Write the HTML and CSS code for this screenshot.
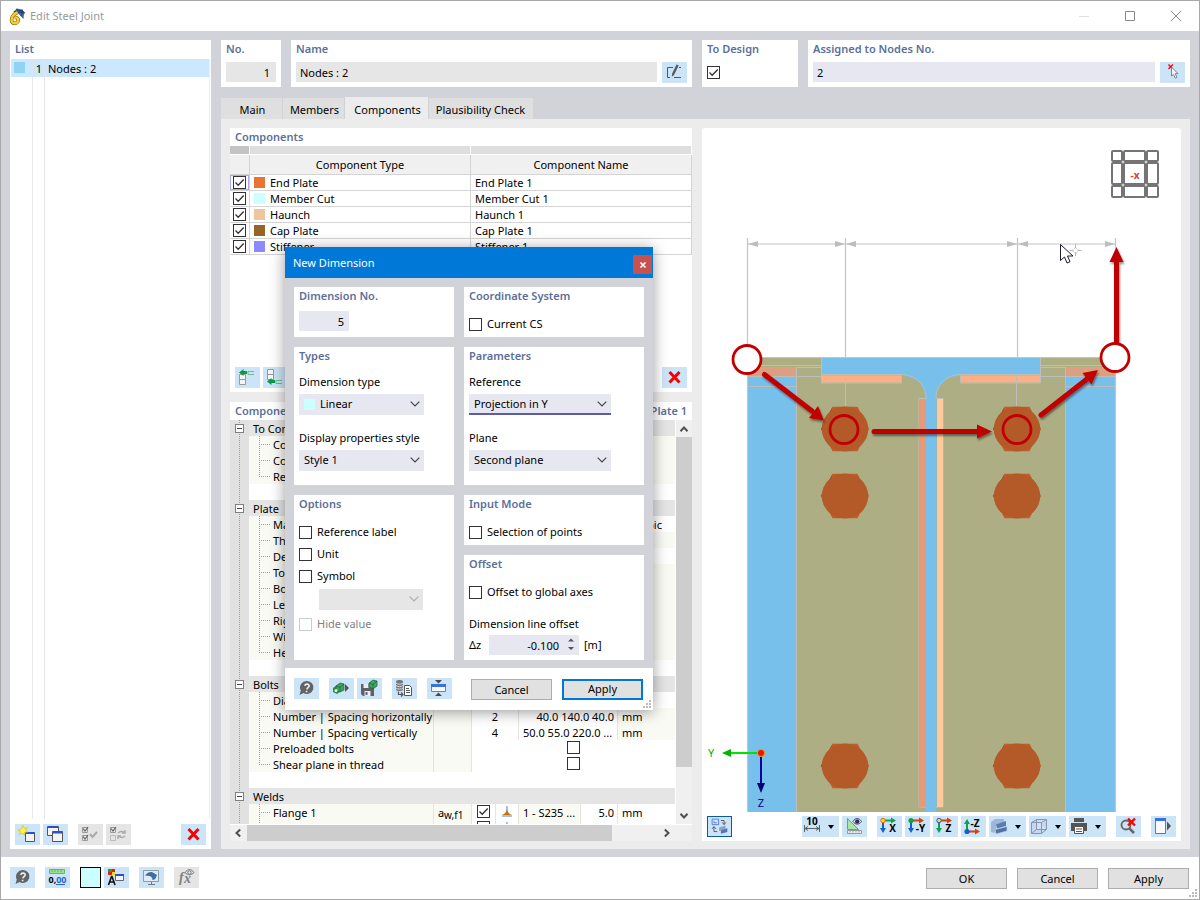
FILE: index.html
```html
<!DOCTYPE html>
<html lang="en">
<head>
<meta charset="utf-8">
<title>Edit Steel Joint</title>
<link rel="stylesheet" href="styles.css">
</head>
<body>
<svg class="defs" aria-hidden="true">
  <defs>
    <symbol id="i-help" viewBox="0 0 25 21"><path d="M13 3a6.500 6.500 0 1 1-3.500 12L5.500 17l1.300-4.500A6.500 6.500 0 0 1 13 3z" fill="#636363"/><path d="M10.800 7.800c.5-2.400 4.500-2.200 4.300.2-.1 1.600-2 1.500-2.200 3.300M12.600 12.700v1.600" fill="none" stroke="#e4f0fa" stroke-width="1.700"/></symbol>
    <symbol id="i-x" viewBox="0 0 25 21"><path d="M7.500 5l10 10.500M17.500 5l-10 10.500" stroke="#f90000" stroke-width="3"/></symbol>
    <symbol id="i-chev" viewBox="0 0 10 6"><path d="M.7.700L5 5 9.300.700" fill="none" stroke="currentColor" stroke-width="1.200"/></symbol>
    <symbol id="i-arrow" viewBox="0 0 10 8"><path d="M1.500 6.200L5 2.500l3.500 3.700" fill="none" stroke="#505050" stroke-width="2"/></symbol>
    <symbol id="i-grip" viewBox="0 0 9 9"><path d="M6 0h2v2H6zM3 3h2v2H3zM6 3h2v2H6zM0 6h2v2H0zM3 6h2v2H3zM6 6h2v2H6z" fill="#bbb"/></symbol>
    <symbol id="i-weld" viewBox="0 0 14 14"><path d="M6 1h2v6H6z" fill="#a9bfe3"/><path d="M2 10h10v2H2z" fill="#a9bfe3"/><path d="M7 4c.5 3 2 5 5 6H2c3-1 4.500-3 5-6z" fill="#c07318"/></symbol>
    <symbol id="bolt" viewBox="-25 -25 50 50"><path d="M-24 0L-12.500-22.300H12.500L24 0 12.500 22.300H-12.500z" fill="#c05d28"/><path d="M-24 0L-12.500-22.300-15-14-21 4z" fill="#91481f"/><ellipse rx="23.300" ry="22.500" fill="#b45a28"/></symbol>
  </defs>
</svg>
<div class="window">
  <header class="titlebar">
    <svg class="logo" viewBox="0 0 17 17"><path d="M4 4l4-3.500 5 1L16.500 5l-1.500 1-.5 5-3-3-3-3.500z" fill="#44689b"/><path d="M5 4l9-2M7 1l8 4M9 5l6-1M12 8l2-5" stroke="#1f3963" stroke-width=".8"/><path d="M8.500 4.500C5 5.500 2.500 9 2.500 12c0 2 1.300 3.200 3.200 3.200s3.500-1.200 3.500-3S8 9.300 5.600 9.600" fill="none" stroke="#7a6016" stroke-width="3.600"/><path d="M8.500 4.500C5 5.500 2.500 9 2.500 12c0 2 1.300 3.200 3.200 3.200s3.500-1.200 3.500-3S8 9.300 5.600 9.600" fill="none" stroke="#f5cd2c" stroke-width="2.400"/></svg>
    <h1>Edit Steel Joint</h1>
    <button class="wbtn" aria-label="Minimize"><svg viewBox="0 0 10 10"><path d="M0 5.500h10" stroke="#e2e2e2"/></svg></button>
    <button class="wbtn" aria-label="Maximize"><svg viewBox="0 0 10 10"><path d="M.5.500h9v9h-9z" fill="none" stroke="#8a8a8a"/></svg></button>
    <button class="wbtn" aria-label="Close"><svg viewBox="0 0 10 10"><path d="M0 0l10 10M10 0L0 10" stroke="#8a8a8a"/></svg></button>
  </header>

  <main class="main">
    <section class="panel list">
      <h2>List</h2>
      <div class="listbody">
        <div class="listrow"><span class="c1"><i class="sw sky"></i></span><span class="c2">1</span><span class="c3">Nodes : 2</span></div>
        <div class="listrest"><span class="c1"></span><span class="c2"></span><span class="c3"></span></div>
      </div>
      <div class="tools">
        <button class="ib" aria-label="New"><svg viewBox="0 0 25 21"><path d="M10.500 8.500h9v9h-9z" fill="#f1f3f7" stroke="#555"/><path d="M11 8h8.500v2H11z" fill="#2c50c8"/><path d="M8 1.500l1.200 3L12.500 3.500l-1.800 2.800 2.300 1.700-3.300.3-.2 3.200-2-2.500-3 1.500 1-3-2.500-1.500 3-.5z" fill="#fff04a" stroke="#d9b800" stroke-width=".6"/></svg></button>
        <button class="ib" aria-label="Copy"><svg viewBox="0 0 25 21"><path d="M4.500 2.500h11v9h-11z" fill="#f1f3f7" stroke="#555"/><path d="M5 2h10v2H5z" fill="#2c50c8"/><path d="M9.500 7.500h10v10h-10z" fill="#f1f3f7" stroke="#555"/><path d="M10 7h9v2.500h-9z" fill="#2c50c8"/></svg></button>
        <button class="ib off gap" aria-label="Select all" disabled><svg viewBox="0 0 25 21"><g fill="none" stroke="#9a9a9a"><path d="M4.500 3.500h5v5h-5zM4.500 11.500h5v5h-5z"/><path d="M5 4.500l2 2.500L10 3M5 12.500l2 2.500 3-4" stroke="#666" stroke-width="1.200"/><path d="M12 10l2.500 3L19 8" stroke="#aaa" stroke-width="2"/></g></svg></button>
        <button class="ib off" aria-label="Invert selection" disabled><svg viewBox="0 0 25 21"><g fill="none" stroke="#9a9a9a"><path d="M4.500 3.500h5v5h-5z"/><path d="M4.500 11.500h5v5h-5z" stroke="#bbb"/><path d="M5 4.500l2 2.500L10 3" stroke="#666" stroke-width="1.200"/><path d="M12 9c2-2 4-2 6.500-.5M19 6v3h-3M19 12c-2 2-4 2-6.500.5M12 15v-3h3" stroke="#aaa" stroke-width="1.400"/></g></svg></button>
        <span class="fill"></span>
        <button class="ib" aria-label="Delete"><svg><use href="#i-x"/></svg></button>
      </div>
    </section>

    <div class="right">
      <div class="heads">
        <section class="panel no"><h2><label for="no">No.</label></h2><input id="no" class="tf grey num" value="1" readonly></section>
        <section class="panel name"><h2><label for="name">Name</label></h2>
          <div class="line"><input id="name" class="tf grey" value="Nodes : 2" readonly><button class="ib" aria-label="Edit name"><svg viewBox="0 0 25 21"><path d="M11 5.500H5.500v10H8M12 15.500h7M17 5.500h2" fill="none" stroke="#555"/><path d="M14.500 2.500l2.200 1L12 13l-2.200 1.800.2-3z" fill="#5b5b5b"/></svg></button></div></section>
        <section class="panel design"><h2>To Design</h2><input type="checkbox" class="cb" checked aria-label="To Design"></section>
        <section class="panel assigned"><h2><label for="nodes">Assigned to Nodes No.</label></h2>
          <div class="line"><input id="nodes" class="tf" value="2"><button class="ib" aria-label="Select nodes"><svg viewBox="0 0 25 21"><path d="M8.500 2.500l4 4.500M13 2.500L8.500 7" stroke="#f00" stroke-width="1.400"/><path d="M11.500 5v9l2-1.600 1.800 3.800 1.700-.8-1.800-3.700h2.800z" fill="#f4f8fc" stroke="#777" stroke-width=".9"/></svg></button></div></section>
      </div>

      <nav class="tabs" role="tablist">
        <button class="tab t1" role="tab">Main</button><button class="tab t2" role="tab">Members</button><button class="tab t3 on" role="tab" aria-selected="true">Components</button><button class="tab t4" role="tab">Plausibility Check</button>
      </nav>

      <div class="body">
        <div class="leftcol">
          <section class="panel comps">
            <h2>Components</h2>
            <table class="ctable">
              <colgroup><col class="k1"><col class="k2"><col class="k3"></colgroup>
              <thead><tr class="strip"><td></td><td></td><td></td></tr><tr><th></th><th>Component Type</th><th>Component Name</th></tr></thead>
              <tbody>
                <tr><td class="cur"><input type="checkbox" class="cb" checked aria-label="End Plate"></td><td><i class="sw orange"></i>End Plate</td><td>End Plate 1</td></tr>
                <tr><td><input type="checkbox" class="cb" checked aria-label="Member Cut"></td><td><i class="sw cyan"></i>Member Cut</td><td>Member Cut 1</td></tr>
                <tr><td><input type="checkbox" class="cb" checked aria-label="Haunch"></td><td><i class="sw tan"></i>Haunch</td><td>Haunch 1</td></tr>
                <tr><td><input type="checkbox" class="cb" checked aria-label="Cap Plate"></td><td><i class="sw brown"></i>Cap Plate</td><td>Cap Plate 1</td></tr>
                <tr><td><input type="checkbox" class="cb" checked aria-label="Stiffener"></td><td><i class="sw violet"></i>Stiffener</td><td>Stiffener 1</td></tr>
              </tbody>
            </table>
            <div class="tools push">
              <button class="ib" aria-label="Insert above"><svg viewBox="0 0 25 21"><path d="M4.500 7.500h6v5h-6zM4.500 12.500h6v5h-6z" fill="#f6f6f6" stroke="#999"/><path d="M4 5.500L8.500 2v2H12v3H8.500v2z" fill="#0a9a48"/><path d="M19 4.500h-6v3h6" fill="none" stroke="#6cc08e"/></svg></button>
              <button class="ib" aria-label="Insert below"><svg viewBox="0 0 25 21"><path d="M4.500 2.500h6v5h-6zM4.500 7.500h6v5h-6z" fill="#f6f6f6" stroke="#999"/><path d="M4 14.500L8.500 11v2H12v3H8.500v2z" fill="#0a9a48"/><path d="M19 13.500h-6v3h6" fill="none" stroke="#6cc08e"/></svg></button>
              <span class="fill"></span>
              <button class="ib" aria-label="Delete component"><svg><use href="#i-x"/></svg></button>
            </div>
          </section>

          <section class="panel settings">
            <div class="stitle"><h2>Component Settings</h2><h2>End Plate 1</h2></div>
            <div class="scroller">
              <div class="viewport">
                <table class="tree">
                  <colgroup><col class="w19"><col><col class="w38"><col class="w24"><col class="w23"><col class="w62"><col class="w37"><col class="w57"></colgroup>
                  <tbody>
                    <tr class="g first"><td><button class="exp" aria-label="Collapse"></button></td><td colspan="7">To Connect</td></tr>
                    <tr><td></td><td>Connected</td><td></td><td colspan="4"></td><td></td></tr>
                    <tr><td></td><td>Connector</td><td></td><td colspan="4"></td><td></td></tr>
                    <tr class="last"><td></td><td>Reference</td><td></td><td colspan="4"></td><td></td></tr>
                    <tr class="gap"><td></td><td colspan="7"></td></tr>
                    <tr class="g"><td><button class="exp" aria-label="Collapse"></button></td><td colspan="7">Plate</td></tr>
                    <tr><td></td><td>Material</td><td></td><td colspan="5" class="mat">Isotropic</td></tr>
                    <tr><td></td><td>Thickness</td><td></td><td colspan="4"></td><td></td></tr>
                    <tr><td></td><td>Definition</td><td></td><td colspan="5" class="plain"></td></tr>
                    <tr><td></td><td>Top offset</td><td></td><td colspan="4"></td><td></td></tr>
                    <tr><td></td><td>Bottom offset</td><td></td><td colspan="4"></td><td></td></tr>
                    <tr><td></td><td>Left offset</td><td></td><td colspan="4"></td><td></td></tr>
                    <tr><td></td><td>Right offset</td><td></td><td colspan="4"></td><td></td></tr>
                    <tr><td></td><td>Width</td><td></td><td colspan="4"></td><td></td></tr>
                    <tr class="last"><td></td><td>Height</td><td></td><td colspan="4"></td><td></td></tr>
                    <tr class="gap"><td></td><td colspan="7"></td></tr>
                    <tr class="g"><td><button class="exp" aria-label="Collapse"></button></td><td colspan="7">Bolts</td></tr>
                    <tr><td></td><td>Diameter</td><td></td><td colspan="5" class="plain"></td></tr>
                    <tr><td></td><td>Number | Spacing horizontally</td><td></td><td colspan="2" class="mid">2</td><td colspan="2" class="num">40.0 140.0 40.0</td><td class="unit">mm</td></tr>
                    <tr><td></td><td>Number | Spacing vertically</td><td></td><td colspan="2" class="mid">4</td><td colspan="2" class="val">50.0 55.0 220.0 ...</td><td class="unit">mm</td></tr>
                    <tr><td></td><td>Preloaded bolts</td><td></td><td colspan="5" class="mid box"><input type="checkbox" class="cb" aria-label="Preloaded bolts"></td></tr>
                    <tr class="last"><td></td><td>Shear plane in thread</td><td></td><td colspan="5" class="mid box"><input type="checkbox" class="cb" aria-label="Shear plane in thread"></td></tr>
                    <tr class="gap"><td></td><td colspan="7"></td></tr>
                    <tr class="g"><td><button class="exp" aria-label="Collapse"></button></td><td colspan="7">Welds</td></tr>
                    <tr class="w"><td></td><td>Flange 1</td><td class="sym">a<small>w,f1</small></td><td class="mid box"><input type="checkbox" class="cb" checked aria-label="Flange 1"></td><td class="mid box"><svg class="weld"><use href="#i-weld"/></svg></td><td class="val dim">1 - S235 ...</td><td class="num">5.0</td><td class="unit plain">mm</td></tr>
                    <tr class="w"><td></td><td></td><td></td><td class="mid box"><input type="checkbox" class="cb" aria-label="Flange 2"></td><td class="mid box"><svg class="weld"><use href="#i-weld"/></svg></td><td class="val dim"></td><td></td><td class="unit plain"></td></tr>
                  </tbody>
                </table>
              </div>
              <div class="vbar"><svg><use href="#i-arrow"/></svg><i></i><svg class="down"><use href="#i-arrow"/></svg></div>
            </div>
            <div class="hbar"><svg class="lt"><use href="#i-arrow"/></svg><i></i><svg class="rt"><use href="#i-arrow"/></svg></div>
          </section>
        </div>

        <section class="view">
          <svg class="scene" viewBox="702 128 479 684" preserveAspectRatio="xMidYMax meet" role="img" aria-label="Joint view">
            <defs>
              <filter id="sh" x="-20%" y="-20%" width="140%" height="150%"><feDropShadow dx="1" dy="2" stdDeviation="1.300" flood-opacity=".45"/></filter>
              <g id="half">
                <path d="M747 358h74v18h80c14 0 24.500 8 24.500 23v413H796V376h-49z" fill="#aeae85"/>
                <path d="M747 367h49v9h-49z" fill="#dc9f80"/>
                <path d="M821 375.500h80v7h-80z" fill="#ffaf84"/>
                <path d="M747.500 365.500H821M796.500 812V367.500H821M747 376.500h74M747 386.500h49M821.500 358v25h80v-7.500M821 374.500h80c14 0 25 9 25 24h-7V807h7" fill="none" stroke="#bfbdb8"/>
                <path d="M845.500 376v31" stroke="#bfbdb8"/>
              </g>
            </defs>
            <path d="M747 358h368v454H747z" fill="#78c0ec"/>
            <use href="#half"/><use href="#half" transform="translate(1862 0) scale(-1 1)"/>
            <path d="M919 399h6.500v408H919z" fill="#e69a78"/><path d="M937 399h6v408h-6z" fill="#ffcb9c"/>
            <g fill="none" stroke="#c4c4c4"><path d="M747.500 238v574M1115.500 238v574M747 357.500h368M845.500 238v119M1017.500 238v119M748 244h367" stroke-width="1.200"/></g>
            <path d="M748 244l10-3v6zM845 244l-10-3v6zM846 244l10-3v6zM1017 244l-10-3v6zM1018 244l10-3v6zM1115 244l-10-3v6z" fill="#bdbdbd"/>
            <g>
              <use href="#bolt" x="820" y="404" width="50" height="50"/><use href="#bolt" x="820" y="471" width="50" height="50"/><use href="#bolt" x="820" y="741" width="50" height="50"/>
              <use href="#bolt" x="992" y="404" width="50" height="50"/><use href="#bolt" x="992" y="471" width="50" height="50"/><use href="#bolt" x="992" y="741" width="50" height="50"/>
            </g>
            <g filter="url(#sh)" fill="#c00000" stroke="#c00000">
              <path d="M764.500 374.500L812 411M874 431.500h106M1041 415l46-36M1116.500 343V261" stroke-width="5" stroke-linecap="round"/>
              <path d="M824 420.500l-15-2.500 9-12zM992 431.500l-15-7v14zM1098 370l-15.500 3 9 11.500zM1116.500 247l-7 15h14z" stroke="none"/>
            </g>
            <g fill="none" stroke="#c00000" stroke-width="2.800"><circle cx="747" cy="359.500" r="14" fill="#fff"/><circle cx="844" cy="429.500" r="14"/><circle cx="1017" cy="429.500" r="14"/><circle cx="1115" cy="357.500" r="14" fill="#fff"/></g>
            <g fill="none" stroke="#757373" stroke-width="2"><rect x="1112" y="151" width="10" height="10" rx="1"/><rect x="1124" y="151" width="21" height="10" rx="1"/><rect x="1147" y="151" width="11" height="10" rx="1"/><rect x="1112" y="163" width="10" height="21" rx="1"/><rect x="1124" y="163" width="21" height="21" rx="1"/><rect x="1147" y="163" width="11" height="21" rx="1"/><rect x="1112" y="186" width="10" height="11" rx="1"/><rect x="1124" y="186" width="21" height="11" rx="1"/><rect x="1147" y="186" width="11" height="11" rx="1"/></g>
            <text x="1135" y="179" class="cube">-x</text>
            <path d="M1060.500 244.500v16l4-3.500 2.500 6 3-1.300-2.500-5.700h5.500z" fill="#fff" stroke="#1b1b33"/>
            <path d="M1075.500 244v4M1075.500 252v4M1069.500 250.500h4M1077.500 250.500h4" stroke="#bbb"/><circle cx="1075.500" cy="250.500" r="2.500" fill="none" stroke="#bbb" stroke-dasharray="1 1"/>
            <path d="M761 753h-30" stroke="#00e400" stroke-width="2"/><path d="M722 753l9-4v8z" fill="#00b400"/><path d="M761 753v30" stroke="#0000a8" stroke-width="2"/><path d="M761 793l-4-10h8z" fill="#000070"/>
            <circle cx="761" cy="753" r="3.600" fill="#f01010" stroke="#f0a000"/><text x="711" y="757" class="ax gy">Y</text><text x="761" y="807" class="ax bz">Z</text>
          </svg>
          <div class="tools vt">
            <button class="ib act" aria-label="Switch view"><svg viewBox="0 0 25 21"><path d="M4.500 2.500h7v6h-7zM6.500 4.500v2h3" fill="#d6e3fb" stroke="#4b78d8"/><path d="M14 4h3.500v4M15.500 6l2 2.500 2-2.500M10 16H6.500v-5M4.500 13l2-2.500 2 2.500" fill="none" stroke="#555"/><path d="M12 11.500l7-2v4l-7 2z" fill="#87a5d2"/><path d="M14 14.500l7-2v4l-7 2z" fill="#5877ab"/></svg></button>
            <span class="fill"></span>
            <button class="ib wide" aria-label="Dimensions"><svg viewBox="0 0 25 21"><text x="10" y="9" class="it">10</text><path d="M2.500 9v7M17.500 9v7M3 12.500h14M6 10.500l-3 2 3 2M14 10.500l3 2-3 2" fill="none" stroke="#555" stroke-width=".9"/></svg><b></b></button>
            <button class="ib" aria-label="Show dimensions"><svg viewBox="0 0 25 21"><path d="M5.500 2.500v11h11z" fill="#a7e6a7" stroke="#52b852"/><path d="M5.500 14.500h14v3h-14z" fill="#eee" stroke="#999"/><path d="M8 15v1.500M11 15v1.500M14 15v1.500M17 15v1.500" stroke="#999"/><path d="M11 5.500c2.500-4 6-4 8.500 0-2.500 3.500-6 3.500-8.500 0z" fill="#fff" stroke="#445"/><circle cx="15.300" cy="5.500" r="2.300" fill="#2c2c70"/></svg></button>
            <button class="ib gap" aria-label="View X"><svg viewBox="0 0 25 21"><path d="M6 5v9" stroke="#1760cc" stroke-width="2"/><path d="M3 12h6l-3 5z" fill="#1760cc"/><path d="M6 4.500h9" stroke="#10a050" stroke-width="2"/><path d="M14 1.500v6l5-3z" fill="#10a050"/><circle cx="6" cy="4.500" r="2.200" fill="#fd3" stroke="#e60"/><text x="15.500" y="16" class="it">X</text></svg></button>
            <button class="ib" aria-label="View -Y"><svg viewBox="0 0 25 21"><path d="M6 5v9" stroke="#1760cc" stroke-width="2"/><path d="M3 12h6l-3 5z" fill="#1760cc"/><path d="M6 4.500h9" stroke="#d8400c" stroke-width="2"/><path d="M14 1.500v6l5-3z" fill="#d8400c"/><circle cx="6" cy="4.500" r="2.600" fill="#10a050"/><text x="15.500" y="16" class="it">-Y</text></svg></button>
            <button class="ib" aria-label="View Z"><svg viewBox="0 0 25 21"><path d="M6 5v9" stroke="#10a050" stroke-width="2"/><path d="M3 12h6l-3 5z" fill="#10a050"/><path d="M6 4.500h9" stroke="#d8400c" stroke-width="2"/><path d="M14 1.500v6l5-3z" fill="#d8400c"/><circle cx="6" cy="4.500" r="2.200" fill="#fd3" stroke="#25c"/><text x="15.500" y="16" class="it">Z</text></svg></button>
            <button class="ib" aria-label="View -Z"><svg viewBox="0 0 25 21"><path d="M6 15V6" stroke="#10a050" stroke-width="2"/><path d="M3 8h6L6 3z" fill="#10a050"/><path d="M6 15.500h9" stroke="#d8400c" stroke-width="2"/><path d="M14 12.500v6l5-3z" fill="#d8400c"/><circle cx="6" cy="15.500" r="2.600" fill="#1760cc"/><text x="14" y="11" class="it">-Z</text></svg></button>
            <button class="ib wide" aria-label="Display mode"><svg viewBox="0 0 25 21"><path d="M2 6l4-3h9v4l-8 3v5l-2 2-3-1z" fill="#9db7dc"/><path d="M7 8.500L17 5v5L8 12.500z" fill="#5a7db0"/><path d="M6 13.500l12-3v4.500L7 18z" fill="#5071a6" stroke="#c2d3ea" stroke-width=".7"/></svg><b></b></button>
            <button class="ib wide" aria-label="Transparency"><svg viewBox="0 0 25 21"><path d="M2.500 6.500l5-3h10v10l-5 4h-10zM2.500 6.500h10l5-3M12.500 6.500v11M7.500 3.500v10h10M7.500 13.500l-5 4" fill="#c3c9e6" fill-opacity=".5" stroke="#8a94b4"/></svg><b></b></button>
            <button class="ib wide" aria-label="Print"><svg viewBox="0 0 25 21"><path d="M5 2h10v4H5zM2 7h16v8H2z" fill="#555"/><path d="M5.500 10.500h9v7h-9z" fill="#fff" stroke="#555"/><path d="M7 13h6M7 15.500h6" stroke="#555"/></svg><b></b></button>
            <button class="ib gap" aria-label="Reset zoom"><svg viewBox="0 0 25 21"><circle cx="10" cy="9" r="4.500" fill="none" stroke="#666" stroke-width="1.800"/><path d="M13 12l5 5" stroke="#666" stroke-width="2.500"/><path d="M12 2.500l7 7M19 2.500l-7 7" stroke="#f00" stroke-width="2.400"/></svg></button>
            <button class="ib gap" aria-label="Panel"><svg viewBox="0 0 25 21"><path d="M4.500 3.500h10v14h-10z" fill="#fafafa" stroke="#777"/><path d="M4 2h11v3H4z" fill="#3a70e0"/><path d="M16 5.500l4 4.500-4 4.500z" fill="#555"/></svg></button>
          </div>
        </section>
      </div>
    </div>
  </main>

  <footer class="footer">
    <div class="tools foot">
      <button class="ib" aria-label="Help"><svg><use href="#i-help"/></svg></button>
      <button class="ib gap" aria-label="Units"><svg viewBox="0 0 25 21"><path d="M4.500 2.500h15v4h-15z" fill="#9be08c" stroke="#6ab85c"/><path d="M7 3v2M10 3v2M13 3v2M16 3v2" stroke="#5a9a50" stroke-width=".7"/><text x="12.500" y="16" class="dec">0,<tspan fill="#2a64c8">00</tspan></text><path d="M11 17.500h9" stroke="#2a64c8"/></svg></button>
      <button class="swatch gap" aria-label="Color"></button>
      <button class="ib" aria-label="Display properties"><svg viewBox="0 0 25 21"><path d="M4 2h4v3H4z" fill="#20a030"/><path d="M8 2h3v3H8z" fill="#e02020"/><path d="M4 5h4v3H4z" fill="#e02020"/><path d="M8 5h3v3H8z" fill="#f0e020"/><path d="M4.500 18l3-8.500h.5l3 8.500M5.500 15h4.500" fill="none" stroke="#111" stroke-width="1.600"/><path d="M11.500 7.500h8v6h-8z" fill="#f2f6fb" stroke="#666"/><path d="M11 7h9v2h-9z" fill="#2c50c8"/></svg></button>
      <button class="ib gap" aria-label="Display"><svg viewBox="0 0 25 21"><path d="M4.500 3.500h15v11h-15z" fill="#deebf8" stroke="#8d9bab"/><path d="M6 8.500c2-3 5-4 7-3.500l5 3-1.500 3.500c-1 1-2 1.500-3 1.500 0-2-1-3.500-3-4z" fill="#3e6ea2"/><path d="M12.500 15v2M9 17.500h7" stroke="#777"/></svg></button>
      <button class="ib off gap" aria-label="Formula" disabled><svg viewBox="0 0 25 21"><text x="5" y="15" class="fx">f</text><text x="10" y="16" class="fx">x</text><circle cx="15.500" cy="5.500" r="1.700" fill="none" stroke="#777"/><path d="M11 5.500c3-4 6-4 9 0-3 3-6 3-9 0z" fill="none" stroke="#777"/></svg></button>
    </div>
    <span class="fill"></span>
    <button class="btn">OK</button><button class="btn">Cancel</button><button class="btn">Apply</button>
    <svg class="grip"><use href="#i-grip"/></svg>
  </footer>

  <div class="dialog" role="dialog" aria-label="New Dimension">
    <div class="dtitle"><h1>New Dimension</h1><button aria-label="Close"><svg viewBox="0 0 8 8"><path d="M1.500 1.500l5 5M6.500 1.500l-5 5" stroke="#fff" stroke-width="1.700"/></svg></button></div>
    <div class="dbody">
      <section class="panel"><h2><label for="dno">Dimension No.</label></h2><input id="dno" class="tf num dno" value="5"></section>
      <section class="panel"><h2>Coordinate System</h2><label class="ck"><input type="checkbox" class="cb">Current CS</label></section>
      <section class="panel">
        <h2>Types</h2>
        <label class="fl" for="dt">Dimension type</label>
        <div class="sel w125"><select id="dt" class="swp"><option>Linear</option></select><i class="sw cyan"></i><svg><use href="#i-chev"/></svg></div>
        <label class="fl" for="ds">Display properties style</label>
        <div class="sel w125"><select id="ds"><option>Style 1</option></select><svg><use href="#i-chev"/></svg></div>
      </section>
      <section class="panel">
        <h2>Parameters</h2>
        <label class="fl" for="rf">Reference</label>
        <div class="sel w142 focus"><select id="rf"><option>Projection in Y</option></select><svg><use href="#i-chev"/></svg></div>
        <label class="fl" for="pl">Plane</label>
        <div class="sel w142"><select id="pl"><option>Second plane</option></select><svg><use href="#i-chev"/></svg></div>
      </section>
      <section class="panel tall">
        <h2>Options</h2>
        <label class="ck"><input type="checkbox" class="cb">Reference label</label>
        <label class="ck"><input type="checkbox" class="cb">Unit</label>
        <label class="ck"><input type="checkbox" class="cb">Symbol</label>
        <div class="sel w104 dis"><select aria-label="Symbol" disabled><option></option></select><svg><use href="#i-chev"/></svg></div>
        <label class="ck dis"><input type="checkbox" class="cb" disabled>Hide value</label>
      </section>
      <section class="panel"><h2>Input Mode</h2><label class="ck"><input type="checkbox" class="cb">Selection of points</label></section>
      <section class="panel">
        <h2>Offset</h2>
        <label class="ck"><input type="checkbox" class="cb">Offset to global axes</label>
        <label class="fl o" for="dz">Dimension line offset</label>
        <div class="off-row"><span class="dz">Δz</span><span class="spin"><input id="dz" class="tf num" value="-0.100"><svg viewBox="0 0 6 13"><path d="M0 3.500h6L3 .5zM0 9h6l-3 3z" fill="#555"/></svg></span><span>[m]</span></div>
      </section>
    </div>
    <div class="dfoot">
      <button class="ib" aria-label="Help"><svg><use href="#i-help"/></svg></button>
      <button class="ib gap" aria-label="Load"><svg viewBox="0 0 25 21"><path d="M4 10l4-3 4 1 0 5-4 3-4-2z" fill="#2f8a4c"/><path d="M7 8l4-3 4 1v6l-4 2-4-2z" fill="#3fa45e" stroke="#1d5f35" stroke-width=".7"/><path d="M7 8l4 1.500V14M11 9.500L15 6" fill="none" stroke="#1d5f35" stroke-width=".7"/><circle cx="7" cy="12.500" r="1.500" fill="#cfe"/><path d="M16 6l4 4-4 4z" fill="#555"/></svg></button>
      <button class="ib" aria-label="Save"><svg viewBox="0 0 25 21"><path d="M4 6h9v3h4v9H6l-2-2z" fill="#5d6268"/><path d="M6.500 6h5v4h-5zM7.500 13h6v5h-6z" fill="#e8eef5"/><path d="M8.500 14h2v3h-2z" fill="#5d6268"/><path d="M12 5l4-3 4 1v5l-4 3-4-2z" fill="#3fa45e" stroke="#1d5f35" stroke-width=".7"/><path d="M12 5l4 1.500V11M16 6.500L20 3" fill="none" stroke="#1d5f35" stroke-width=".7"/></svg></button>
      <button class="ib gap" aria-label="Copy data"><svg viewBox="0 0 25 21"><path d="M4 3.500c0-2 7-2 7 0v8c0 2-7 2-7 0z" fill="#777"/><path d="M4 5c1 1.500 6 1.500 7 0M4 7.500c1 1.500 6 1.500 7 0M4 10c1 1.500 6 1.500 7 0" fill="none" stroke="#dce9f6" stroke-width=".9"/><path d="M6.500 13.500v3H11M9 14.500l2 2-2 2" fill="none" stroke="#555" stroke-width="1.200"/><path d="M12.500 7.500h5l2 2v8h-7z" fill="#fff" stroke="#555"/><path d="M14 10.500h3M14 12.500h4M14 14.500h4" stroke="#555"/></svg></button>
      <button class="ib gap" aria-label="Height"><svg viewBox="0 0 25 21"><path d="M4.500 6.500h14v7h-14z" fill="#f6f9fd" stroke="#4e86e4"/><path d="M4 6h15v3H4z" fill="#3a70e0"/><path d="M8 2h7l-3.500 3.500zM8 18h7l-3.500-3.500z" fill="#4a4a4a"/></svg></button>
      <span class="fill"></span>
      <button class="btn">Cancel</button><button class="btn def">Apply</button>
      <svg class="grip"><use href="#i-grip"/></svg>
    </div>
  </div>
</div>
</body>
</html>
```
FILE: styles.css
```css
* { box-sizing: border-box; }
html, body { margin: 0; height: 100%; }
body, button, input, select { font-family: "Noto Sans", "Open Sans", sans-serif; font-size: 11px; line-height: 16px; color: #000; }
button { padding: 0; border: 0; background: none; }
h1, h2 { margin: 0; font-size: 11px; font-weight: 400; }
.defs { position: absolute; width: 0; height: 0; }
.fill { flex: 1; }

.window { position: relative; display: flex; flex-direction: column; min-height: 100vh; border: 1px solid #a8a8a8; background: #fff; }
.titlebar { display: flex; align-items: center; height: 30px; padding-left: 8px; }
.logo { width: 17px; height: 17px; }
.titlebar h1 { flex: 1; margin-left: 4px; font-size: 11px; color: #999; }
.wbtn { width: 46px; height: 30px; display: grid; place-items: center; }
.wbtn svg { width: 10px; height: 10px; }

.main { flex: 1; display: flex; gap: 10px; padding: 9px 9px 8px; background: #d2d3d8; }
.panel { background: #fff; padding: 0 5px; }
.panel h2 { font-weight: 600; color: #5c6f99; line-height: 18px; }
.line { display: flex; gap: 5px; }
.tf { width: 100%; min-width: 0; height: 20px; border: 0; padding: 1px 4px 0; background: #e7e7f1; outline: 0; }
.grey { background: #e6e6e6; }
.num { text-align: right; }
.cb { appearance: none; flex: none; width: 13px; height: 13px; margin: 0; border: 1px solid #333; background: #fff; }
.cb:checked { background: #fff url("data:image/svg+xml,%3Csvg xmlns='http://www.w3.org/2000/svg' viewBox='0 0 11 11'%3E%3Cpath d='M1.500 5.500l2.700 2.700L9.700 2.500' fill='none' stroke='%23333' stroke-width='1.300'/%3E%3C/svg%3E"); }
.cb:disabled { border-color: #ccc; }
.sw { display: inline-block; width: 11px; height: 11px; }
.sky { background: #8fd4f3; } .orange { background: #e87533; } .cyan { background: #ccffff; }
.tan { background: #efc59e; } .brown { background: #946429; } .violet { background: #8b8bff; }

.ib { display: flex; align-items: center; flex: none; width: 25px; height: 21px; background: #cce4f7; }
.ib svg { display: block; width: 25px; height: 21px; overflow: visible; }
.off { background: #e5e5e5; }
.wide { width: 37px; }
.wide svg { flex: none; }
.wide b { border: solid transparent; border-width: 4px 3px 0; border-top-color: #000; margin-left: 1px; }
.act { border: 1px solid #0a5ca0; }
.act svg { width: 23px; }
.tools { display: flex; gap: 3px; }
.tools .gap { margin-left: 7px; }
.btn { width: 81px; height: 21px; padding-top: 1px; border: 1px solid #adadad; background: #e1e1e1; font-size: 11px; }
.it { font: 700 10px "Open Sans", sans-serif; text-anchor: middle; }
.dec { font: 700 9px "Open Sans", sans-serif; text-anchor: middle; }
.fx { font: italic 700 14px "Liberation Serif", serif; fill: #808080; }
.cube { font: 700 10px "Noto Sans", sans-serif; fill: #d04040; text-anchor: middle; }
.ax { font: 11px "Noto Sans", sans-serif; text-anchor: middle; }
.gy { fill: #00b400; } .bz { fill: #000080; }

.list { display: flex; flex-direction: column; width: 201px; padding-bottom: 4px; }
.listbody { flex: 1; display: flex; flex-direction: column; margin: 1px -4px 5px; border-right: 1px solid #eee; }
.listrow, .listrest { display: flex; }
.listrow { height: 18px; line-height: 19px; background: #cce8ff; }
.listrest { flex: 1; }
.c1 { width: 22px; padding: 3px; border-right: 1px solid #dde6ee; line-height: 0; }
.c2 { width: 12px; text-align: right; padding-right: 2px; border-right: 1px solid #dde6ee; }
.c3 { padding-left: 3px; }
.listrest span { border-color: #e8e8e8; }

.right { flex: 1; min-width: 0; display: flex; flex-direction: column; }
.heads { display: flex; gap: 10px; margin-bottom: 10px; }
.heads .panel { height: 47px; }
.heads h2 { height: 22px; }
.no { width: 60px; } .name { width: 401px; } .design { width: 96px; } .assigned { flex: 1; }
.no input { padding-right: 6px; }
.design .cb { display: block; margin-top: 4px; }

.tabs { display: flex; align-items: flex-end; height: 22px; }
.tab { height: 21px; background: #dfdfdf; border-right: 1px solid #d2d3d8; padding: 3px 0 0 2px; }
.tab.on { height: 22px; background: #ececec; }
.t1, .t2 { width: 62px; } .t3 { width: 84px; } .t4 { width: 105px; padding-right: 3px; }
.body { flex: 1; display: flex; gap: 10px; padding: 9px 9px 8px; background: #ececec; }
.leftcol { width: 462px; display: flex; flex-direction: column; gap: 10px; }
.comps { display: flex; flex-direction: column; height: 264px; padding-bottom: 4px; }
.ctable { table-layout: fixed; width: auto; margin: 0 -5px; border-collapse: separate; border-spacing: 0; }
.ctable td, .ctable th { height: 16px; padding: 0 4px; line-height: 15px; border: solid #d4d4d4; border-width: 0 1px 1px 0; font-weight: 400; white-space: nowrap; }
.ctable th { height: 20px; background: #f0f0f0; }
.ctable .strip td { height: 9px; line-height: 8px; background: #dedede; border-color: #fff; }
.ctable .strip td:first-child { background: #c3c3c3; }
.ctable tbody td:first-child { padding: 0 3px; line-height: 0; }
.ctable .cur { box-shadow: inset 0 0 0 1px #a8a8f4; }
.ctable .sw { margin-right: 5px; vertical-align: -1px; }
.k1 { width: 20px; } .k2 { width: 221px; } .k3 { width: 221px; }
.push { margin-top: auto; padding-bottom: 0; }

.settings { flex: 1; display: flex; flex-direction: column; padding: 0; }
.stitle { display: flex; justify-content: space-between; padding: 0 5px; }
.scroller { display: flex; height: 404px; }
.viewport { flex: 1; overflow: hidden; }
.tree { table-layout: fixed; width: 100%; border-collapse: separate; border-spacing: 0; }
.w19 { width: 19px; } .w38 { width: 38px; } .w24 { width: 24px; } .w23 { width: 23px; } .w62 { width: 62px; } .w37 { width: 37px; } .w57 { width: 57px; }
.tree td { height: 16px; padding: 2px 0 0; line-height: 14px; white-space: nowrap; border-right: 1px solid #e4e4e0; }
.tree td:first-child { padding: 0; border: 0; background: repeating-linear-gradient(#a0a0a0 0 1px, transparent 1px 2px) 9px 0 / 1px 100% no-repeat #e1e1e1; }
.tree td:last-child { border: 0; background: #fafaf5; }
.tree td:nth-child(2) { padding-left: 24px; background: repeating-linear-gradient(#a0a0a0 0 1px, transparent 1px 2px) 10px 0 / 1px 100% no-repeat, repeating-linear-gradient(90deg, #a0a0a0 0 1px, transparent 1px 2px) 10px 8px / 12px 1px no-repeat #fafaf5; }
.tree .last td:nth-child(2) { background-size: 1px 8px, 12px 1px; }
.tree td:nth-child(3) { background: #fafaf5; }
.tree .g td:nth-child(2) { padding-left: 4px; background: #e5e5e5; }
.tree .gap td:nth-child(2) { background: #fff; }
.tree .num { padding-right: 3px; text-align: right; }
.tree .mid { text-align: center; }
.tree td.mid:last-child, .tree td.plain:last-child, .tree td.mat:last-child { background: #fff; }
.tree .box { padding: 0; }
.tree .mid .cb { display: block; margin: 0 auto 2px; }
.tree .val { padding-left: 4px; }
.tree .unit { padding-left: 4px; }
.tree .dim { background: #fafaf5; }
.tree .mat { padding-right: 13px; text-align: right; }
.tree .sym { padding-left: 4px; }
.tree small { font-size: 10px; position: relative; top: 2px; line-height: 10px; }
.weld { display: block; width: 14px; height: 14px; margin: 0 auto; }
.exp { display: block; position: relative; width: 9px; height: 9px; margin: 0 0 0 5px; border: 1px solid #808080; background: linear-gradient(#444, #444) 1px 3px / 5px 1px no-repeat #fff; }
.vbar { display: flex; flex-direction: column; align-items: center; width: 16px; margin-left: 1px; background: #f0f0f0; }
.vbar svg, .hbar svg { flex: none; width: 10px; height: 8px; margin: 5px 0 4px; }
.vbar i { width: 16px; height: 330px; background: #cdcdcd; }
.vbar .down { margin: auto 0 4px; transform: rotate(180deg); }
.hbar { display: flex; align-items: center; height: 16px; margin-top: 1px; background: #f0f0f0; }
.hbar i { width: 365px; height: 16px; background: #cdcdcd; }
.hbar svg { margin: 0 4px 0 3px; }
.lt { transform: rotate(-90deg); }
.hbar .rt { margin: 0 20px 0 auto; transform: rotate(90deg); }

.view { flex: 1; min-width: 0; display: flex; flex-direction: column; background: #fff; border-radius: 3px 3px 0 0; }
.scene { flex: 1; min-height: 0; width: 100%; }
.vt { padding: 4px 5px; }

.footer { position: relative; display: flex; align-items: center; height: 42px; padding: 0 10px 0 9px; gap: 10px; }
.foot { margin-bottom: 2px; }
.swatch { width: 21px; height: 21px; border: 1px solid #000; background: #ccffff; }
.grip { position: absolute; right: 1px; bottom: 1px; width: 9px; height: 9px; }

.dialog { position: absolute; left: 284px; top: 246px; width: 368px; background: #fff; box-shadow: 0 2px 14px rgba(0, 0, 0, .4); }
.dtitle { display: flex; justify-content: space-between; height: 31px; padding: 0 1px 0 8px; background: #0078d7; }
.dtitle h1 { font-size: 11px; line-height: 32px; color: #fff; }
.dtitle button { display: grid; place-items: center; width: 19px; height: 19px; margin-top: 8px; background: #c75050; }
.dtitle button svg { width: 8px; height: 8px; }
.dbody { display: grid; grid-template-columns: 160px 180px; grid-template-rows: 50px 138px 50px 105px; gap: 10px; padding: 9px 9px 8px; background: #d2d3d8; }
.tall { grid-row: 3 / 5; }
.dno { width: 50px; margin-top: 6px; display: block; padding-right: 5px; }
.ck { display: flex; align-items: center; gap: 5px; height: 22px; }
h2 + .ck { margin-top: 8px; }
.ck.dis { color: #808080; margin-top: 3px; }
.fl { display: block; height: 16px; margin: 9px 0 4px; }
.sel { position: relative; height: 21px; background: #e7e7f1; }
.sel select { appearance: none; display: block; width: 100%; height: 20px; padding: 0 20px 0 5px; border: 0; background: none; outline: 0; color: #000; }
.sel .swp { padding-left: 21px; }
.sel .sw { position: absolute; left: 5px; top: 5px; }
.sel svg { position: absolute; right: 4px; top: 7px; width: 10px; height: 6px; color: #444; pointer-events: none; }
.sel + .fl { margin-top: 15px; }
.focus { box-shadow: inset 0 -2px #5c5ca8; }
.w125 { width: 125px; } .w142 { width: 142px; }
.w104 { width: 104px; margin: 2px 0 0 20px; }
.sel.dis { background: #e6e6e6; }
.sel.dis svg { color: #aaa; }
.fl.o { margin: 13px 0 3px; }
.off-row { display: flex; align-items: center; }
.dz { width: 20px; }
.spin { position: relative; width: 90px; margin-right: 5px; }
.spin .tf { display: block; padding-right: 20px; }
.spin svg { position: absolute; right: 5px; top: 3px; width: 6px; height: 13px; }
.dfoot { position: relative; display: flex; align-items: center; height: 42px; padding: 0 10px 0 9px; gap: 3px; }
.dfoot .gap { margin-left: 7px; }
.dfoot .ib { margin-bottom: 2px; }
.dfoot .btn + .btn { margin-left: 7px; }
.def { border: 2px solid #0078d7; padding: 0; }
```
